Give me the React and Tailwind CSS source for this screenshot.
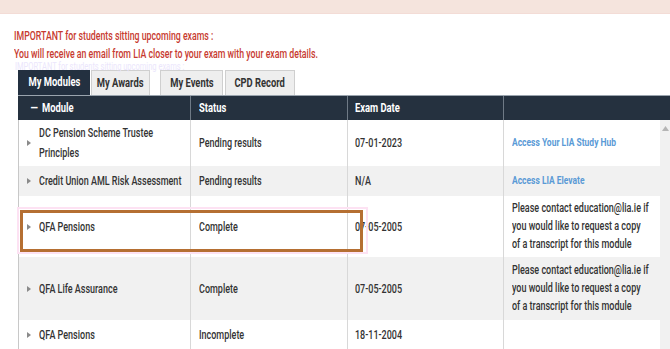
const FONT = { fontFamily: 'Roboto, "Liberation Sans", sans-serif' };

const TABS = [
  { label: 'My Modules', active: true, cls: 'w-[72px]' },
  { label: 'My Awards', cls: 'w-[59px] ml-px' },
  { label: 'My Events', cls: 'w-[63px] ml-[10px]' },
  { label: 'CPD Record', cls: 'w-[70px] ml-[2px]' },
];

const ROWS = [
  { name: ['DC Pension Scheme Trustee', 'Principles'], status: 'Pending results', date: '07-01-2023', link: 'Access Your LIA Study Hub', h: 'h-[46px]', bg: 'bg-white' },
  { name: ['Credit Union AML Risk Assessment'], status: 'Pending results', date: 'N/A', link: 'Access LIA Elevate', h: 'h-[30px]', bg: 'bg-[#f1f1f1]' },
  { name: ['QFA Pensions'], status: 'Complete', date: '07-05-2005', note: true, h: 'h-[61px]', bg: 'bg-white' },
  { name: ['QFA Life Assurance'], status: 'Complete', date: '07-05-2005', note: true, h: 'h-[63px]', bg: 'bg-[#f1f1f1]' },
  { name: ['QFA Pensions'], status: 'Incomplete', date: '18-11-2004', h: 'h-[29px]', bg: 'bg-white' },
];

// condensed look: the source font is much narrower than anything installed
function T({ children, className = 'scale-x-75', center = false }) {
  return (
    <span className={`inline-block whitespace-nowrap ${center ? 'origin-center' : 'origin-left'} ${className}`}>
      {children}
    </span>
  );
}

function Caret() {
  return (
    <svg width="4" height="6" viewBox="0 0 4 6" className="shrink-0">
      <path d="M0 0 L4 3 L0 6 Z" fill="#8a8a8a" />
    </svg>
  );
}

function Row({ r }) {
  return (
    <div className={`flex ${r.h} ${r.bg}`}>
      <div className="w-[172px] flex items-center gap-[8px] pl-[8px] border-l border-[#c8c8c8]">
        <Caret />
        <div className="leading-[20px]">
          {r.name.map(n => <div key={n}><T>{n}</T></div>)}
        </div>
      </div>
      <div className="w-[157px] flex items-center pl-[8px] border-l border-[#d8d8d8]"><T>{r.status}</T></div>
      <div className="w-[156px] flex items-center pl-[7px] border-l border-[#d8d8d8]"><T>{r.date}</T></div>
      <div className="w-[157px] flex items-center pl-[8px] border-l border-[#d8d8d8]">
        {r.link && (
          <a className="text-[11px] font-bold text-[#5a9ad6] underline"><T className="scale-x-77">{r.link}</T></a>
        )}
        {r.note && (
          <div className="leading-[18px] text-[12px] -mt-px">
            <div><T className="scale-x-75">Please contact education@lia.ie if</T></div>
            <div><T className="scale-x-75">you would like to request a copy</T></div>
            <div><T className="scale-x-75">of a transcript for this module</T></div>
          </div>
        )}
      </div>
      <div className="w-[10px] bg-[#f1f1f1]" />
    </div>
  );
}

export default function App() {
  return (
    <div className="w-[670px] h-[349px] overflow-hidden bg-white relative" style={FONT}>
      <div className="h-[14px] bg-[#f5e4dd] border-b border-[#f3dcd6]" />

      <div className="pl-[14px] pt-[13px] text-[12px] font-medium text-[#c73a2f] leading-[18px]">
        <div><T className="scale-x-73">IMPORTANT for students sitting upcoming exams :</T></div>
        <div><T className="scale-x-73">You will receive an email from LIA closer to your exam with your exam details.</T></div>
      </div>

      <div className="pl-[15px] h-[5px] text-[10px] leading-[5px] mt-[1px] text-[#ebe6fc]">
        <T>IMPORTANT for students sitting upcoming exams :</T>
      </div>

      {/* Tabs */}
      <div className="flex pl-[18px] mt-[1px] h-[25px] items-end">
        {TABS.map(t => (
          <div
            key={t.label}
            className={`${t.cls} h-[25px] flex items-center justify-center text-[12.5px] font-bold ${
              t.active
                ? 'bg-[#233040] text-white'
                : 'bg-[#eeeeee] text-[#333] border border-b-0 border-[#cfcfcf]'
            }`}
          >
            <T center>{t.label}</T>
          </div>
        ))}
      </div>

      {/* Table */}
      <div className="pl-[18px] text-[12px] font-medium text-[#333]">
        <div className="flex h-[25px] bg-[#25313f] text-white text-[12.5px] font-bold border-t border-[#9aa4ae]">
          <div className="w-[172px] flex items-center pl-[12px] gap-[4px]">
            <span className="text-[13px]">–</span>
            <T>Module</T>
          </div>
          <div className="w-[157px] flex items-center pl-[8px] border-l border-[#6f7a86]"><T>Status</T></div>
          <div className="w-[156px] flex items-center pl-[7px] border-l border-[#6f7a86]"><T>Exam Date</T></div>
          <div className="flex-1 border-l border-[#6f7a86]" />
        </div>
        <div className="relative">
          {ROWS.map((r, i) => <Row key={i} r={r} />)}
          <svg className="absolute right-[1px] top-[6px]" width="7" height="5" viewBox="0 0 7 5">
            <path d="M0 5 L3.5 0 L7 5 Z" fill="#b5b5b5" />
          </svg>
          <div className="absolute left-[-1px] top-[87px] w-[351px] h-[47px] border-[2px] border-[#fde2f3]" />
          <div className="absolute left-[2px] top-[90px] w-[343px] h-[42px] border-[3px] border-[#b56f32]" />
        </div>
      </div>
    </div>
  );
}
